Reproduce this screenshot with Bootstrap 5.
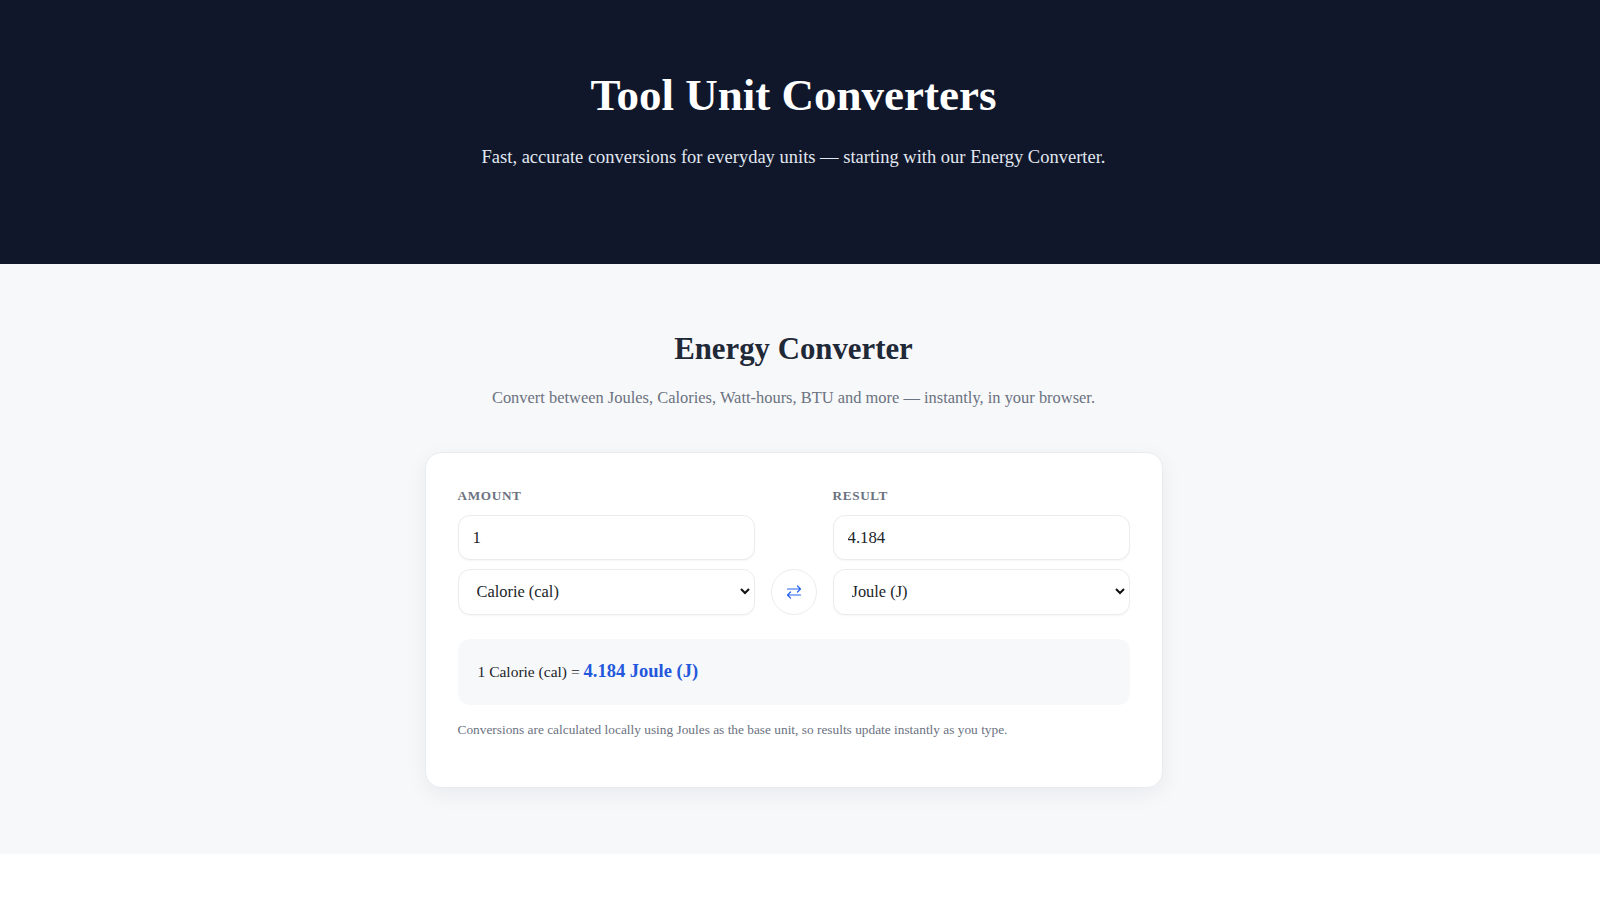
<!DOCTYPE html>
<html lang="en"><head><meta charset="utf-8"><title>Tool Unit Converters</title>
<link href="https://cdn.jsdelivr.net/npm/bootstrap@5.3.0/dist/css/bootstrap.min.css" rel="stylesheet">
<style>
body{font-family:"Liberation Serif","Times New Roman",serif;background:#fff;color:#212529}
.hero-band{background:#10172b;color:#fff;height:264px;padding:68px 13px 0 0}
.hero-title{font-size:45px;font-weight:700;line-height:54px;margin-bottom:22px}
.hero-sub{font-size:18.5px;line-height:27.6px;color:#e2e8f0;margin:0}
.conv-section{background:#f7f8fa;height:590px;padding:66.5px 13px 0 0}
.conv-title{font-size:30.8px;font-weight:700;line-height:37px;margin-bottom:18px;color:#1f2937}
.conv-sub{font-size:16.45px;color:#6b7280;margin-bottom:41.7px;line-height:24.6px}
.conv-card{width:738px;height:336px;margin:0 auto;background:#fff;border:1px solid #e9ecef;border-radius:16px;box-shadow:0 6px 22px rgba(15,23,42,.06);padding:32px}
.field-label{font-size:13.2px;font-weight:700;letter-spacing:.66px;color:#6b7280;text-transform:uppercase;line-height:21px;margin-bottom:9px}
.conv-grid{display:grid;grid-template-columns:1fr 46px 1fr;column-gap:16px;align-items:end}
.conv-input,.conv-select{border:1px solid #e9ecef;border-radius:12px;font-family:inherit;color:#212529;height:45px;box-shadow:0 1px 2px rgba(15,23,42,.04)}
.conv-input{padding:9px 14px 7px;font-size:16.8px}
.conv-select{font-size:16.4px;padding:9px 26px 7px 18px;height:46px;background-size:10px 7px;background-position:right 4px center;background-image:url("data:image/svg+xml,%3csvg xmlns='http://www.w3.org/2000/svg' viewBox='0 0 10 7'%3e%3cpath fill='none' stroke='%23111' stroke-width='2' d='M1 1l4 4 4-4'/%3e%3c/svg%3e")}
.stack-gap{margin-bottom:9px}
.swap-btn{width:46px;height:46px;border-radius:50%;border:1px solid #e9ecef;background:#fff;padding:0;color:#2563eb}
.result-box{background:#f7f8fa;border-radius:12px;margin-top:24px;padding:20px;height:66.500px;font-size:15.5px;line-height:25px}
.result-val{font-size:18.5px;font-weight:700;color:#2358dc}
.fine-note{font-size:13.35px;color:#6b7280;margin:14.500px 0 0;line-height:20px}
</style></head><body>
<header class="hero-band text-center">
<h1 class="hero-title">Tool Unit Converters</h1>
<p class="hero-sub">Fast, accurate conversions for everyday units — starting with our Energy Converter.</p>
</header>
<section class="conv-section text-center">
<h2 class="conv-title">Energy Converter</h2>
<p class="conv-sub">Convert between Joules, Calories, Watt-hours, BTU and more — instantly, in your browser.</p>
<div class="conv-card text-start">
<div class="conv-grid">
<div><div class="field-label">Amount</div><input class="form-control conv-input stack-gap" value="1"><select class="form-select conv-select"><option>Calorie (cal)</option></select></div>
<button class="btn swap-btn d-flex align-items-center justify-content-center" type="button" aria-label="Swap"><svg width="16" height="16" viewBox="0 0 16 16" fill="none" stroke="currentColor" stroke-width="1.2" stroke-linecap="round" stroke-linejoin="round"><path d="M1.500 5h13M11.500 2l3 3-3 3M14.500 11h-13M4.500 8l-3 3 3 3"/></svg></button>
<div><div class="field-label">Result</div><input class="form-control conv-input stack-gap" value="4.184" readonly><select class="form-select conv-select"><option>Joule (J)</option></select></div>
</div>
<div class="result-box">1 Calorie (cal) = <span class="result-val">4.184 Joule (J)</span></div>
<p class="fine-note">Conversions are calculated locally using Joules as the base unit, so results update instantly as you type.</p>
</div>
</section>
</body></html>
